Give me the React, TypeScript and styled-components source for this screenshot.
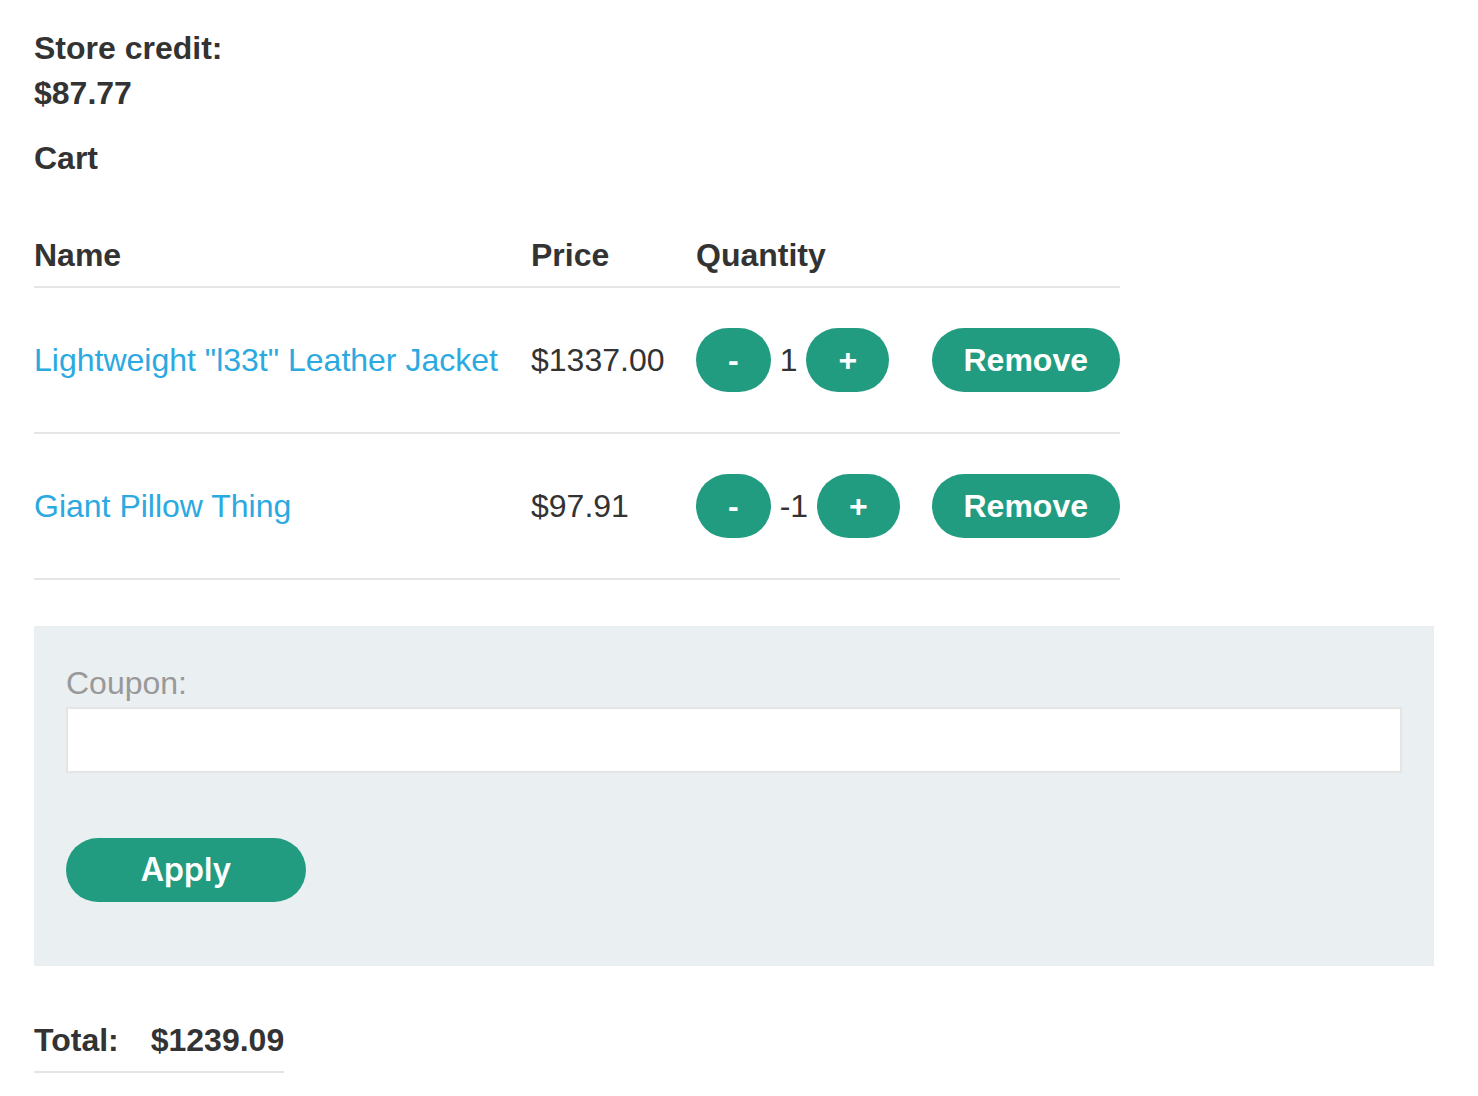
import React from "react";
import styled, { createGlobalStyle } from "styled-components";

const GREEN = "#229c80";
const TEXT = "#333333";
const LINK = "#2ba9e0";
const RULE = "#e5e5e5";

const GlobalStyle = createGlobalStyle`
  html, body {
    margin: 0;
    padding: 0;
    background: #ffffff;
  }
  body {
    font-family: "Liberation Sans", Arial, sans-serif;
    font-size: 32px;
    line-height: 1.4;
    color: ${TEXT};
  }
`;

interface ICartItem {
  name: string;
  price: string;
  quantity: number;
}

const ITEMS: ICartItem[] = [
  { name: 'Lightweight "l33t" Leather Jacket', price: "$1337.00", quantity: 1 },
  { name: "Giant Pillow Thing", price: "$97.91", quantity: -1 },
];

function App() {
  return (
    <Page>
      <GlobalStyle />
      <Credit>
        Store credit:
        <br />
        $87.77
      </Credit>
      <Heading>Cart</Heading>
      <CartTable>
        <colgroup>
          <col style={{ width: 497 }} />
          <col style={{ width: 165 }} />
          <col style={{ width: 235 }} />
          <col />
        </colgroup>
        <thead>
          <tr>
            <HeadCell>Name</HeadCell>
            <HeadCell>Price</HeadCell>
            <HeadCell>Quantity</HeadCell>
            <HeadCell />
          </tr>
        </thead>
        <tbody>
          {ITEMS.map((item) => (
            <Row key={item.name}>
              <Cell>
                <ItemLink href="#">{item.name}</ItemLink>
              </Cell>
              <Cell>{item.price}</Cell>
              <Cell>
                <QuantityControl>
                  <PillButton>-</PillButton>
                  <span>{item.quantity}</span>
                  <PillButton>+</PillButton>
                </QuantityControl>
              </Cell>
              <Cell alignRight>
                <PillButton>Remove</PillButton>
              </Cell>
            </Row>
          ))}
        </tbody>
      </CartTable>
      <CouponPanel>
        <CouponLabel htmlFor="coupon">Coupon:</CouponLabel>
        <CouponInput id="coupon" type="text" />
        <ApplyButton>Apply</ApplyButton>
      </CouponPanel>
      <TotalTable>
        <tbody>
          <TotalRow>
            <TotalCell>Total:</TotalCell>
            <TotalCell>$1239.09</TotalCell>
          </TotalRow>
        </tbody>
      </TotalTable>
    </Page>
  );
}

export default App;

const Page = styled.div`
  width: 1400px;
  padding: 26px 34px 30px;
`;

const Credit = styled.div`
  font-weight: bold;
`;

const Heading = styled.div`
  margin-top: 20px;
  font-weight: bold;
`;

const CartTable = styled.table`
  width: 1086px;
  margin-top: 53px;
  border-collapse: collapse;
  table-layout: fixed;
`;

const HeadCell = styled.th`
  padding: 0 0 8px;
  text-align: left;
  font-weight: bold;
  border-bottom: 2px solid ${RULE};
`;

const Row = styled.tr`
  border-bottom: 2px solid ${RULE};
`;

const Cell = styled.td<{ alignRight?: boolean }>`
  height: 64px;
  padding: 40px 0;
  vertical-align: middle;
  white-space: nowrap;
  text-align: ${(props) => (props.alignRight ? "right" : "left")};
`;

const ItemLink = styled.a`
  color: ${LINK};
  text-decoration: none;
`;

const QuantityControl = styled.div`
  display: inline-flex;
  align-items: center;
  gap: 9px;
  vertical-align: middle;
`;

const PillButton = styled.button`
  display: inline-block;
  height: 64px;
  padding: 0 32px;
  border: none;
  border-radius: 32px;
  background: ${GREEN};
  color: #ffffff;
  font-family: "Liberation Sans", Arial, sans-serif;
  font-size: 32px;
  font-weight: bold;
  line-height: 64px;
  vertical-align: middle;
  cursor: pointer;
`;

const CouponPanel = styled.div`
  margin-top: 46px;
  padding: 35px 32px 64px;
  background: #eaeff2;
  display: flex;
  flex-direction: column;
  align-items: flex-start;
`;

const CouponLabel = styled.label`
  color: #999999;
`;

const CouponInput = styled.input`
  box-sizing: border-box;
  width: 100%;
  height: 66px;
  margin: 1px 0 0;
  border: 2px solid ${RULE};
  background: #ffffff;
  font-size: 32px;
  outline: none;
`;

const ApplyButton = styled(PillButton)`
  width: 240px;
  margin-top: 65px;
  padding: 0;
  font-family: Inter, "Liberation Sans", sans-serif;
  font-weight: 600;
`;

const TotalTable = styled.table`
  margin-top: 52px;
  border-collapse: collapse;
`;

const TotalRow = styled.tr`
  border-bottom: 2px solid ${RULE};
`;

const TotalCell = styled.td`
  padding: 0 32px 8px 0;
  font-weight: bold;
  &:last-child {
    padding-right: 0;
  }
`;
